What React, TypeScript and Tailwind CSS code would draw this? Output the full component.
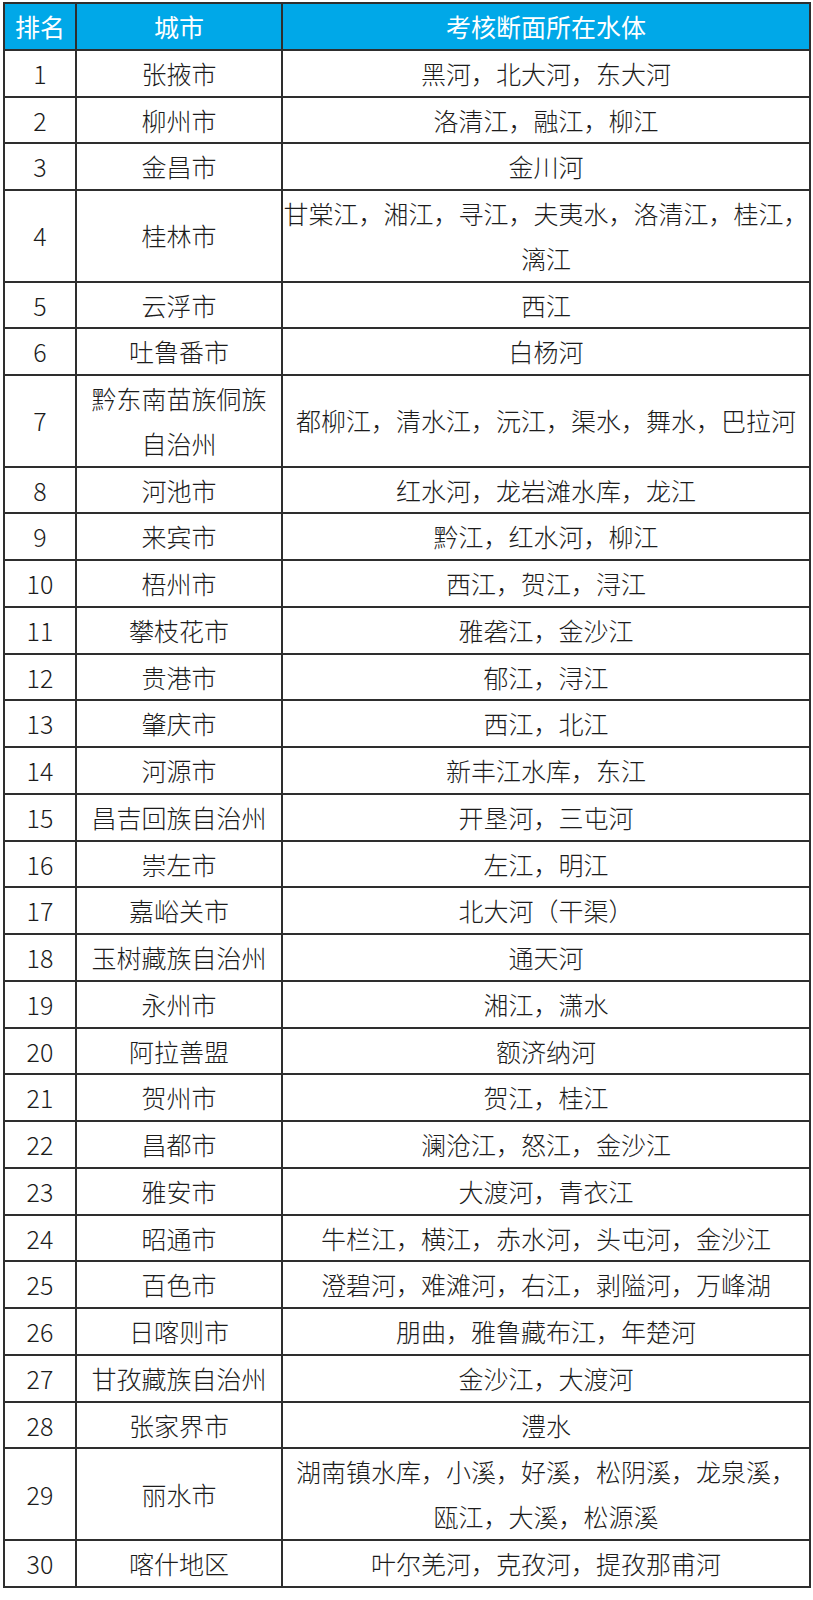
import React from 'react';

type Row = { rank: number; city: string[]; water: string[] };

const ROWS: Row[] = [
  { rank: 1, city: ['张掖市'], water: ['黑河，北大河，东大河'] },
  { rank: 2, city: ['柳州市'], water: ['洛清江，融江，柳江'] },
  { rank: 3, city: ['金昌市'], water: ['金川河'] },
  { rank: 4, city: ['桂林市'], water: ['甘棠江，湘江，寻江，夫夷水，洛清江，桂江，', '漓江'] },
  { rank: 5, city: ['云浮市'], water: ['西江'] },
  { rank: 6, city: ['吐鲁番市'], water: ['白杨河'] },
  { rank: 7, city: ['黔东南苗族侗族', '自治州'], water: ['都柳江，清水江，沅江，渠水，舞水，巴拉河'] },
  { rank: 8, city: ['河池市'], water: ['红水河，龙岩滩水库，龙江'] },
  { rank: 9, city: ['来宾市'], water: ['黔江，红水河，柳江'] },
  { rank: 10, city: ['梧州市'], water: ['西江，贺江，浔江'] },
  { rank: 11, city: ['攀枝花市'], water: ['雅砻江，金沙江'] },
  { rank: 12, city: ['贵港市'], water: ['郁江，浔江'] },
  { rank: 13, city: ['肇庆市'], water: ['西江，北江'] },
  { rank: 14, city: ['河源市'], water: ['新丰江水库，东江'] },
  { rank: 15, city: ['昌吉回族自治州'], water: ['开垦河，三屯河'] },
  { rank: 16, city: ['崇左市'], water: ['左江，明江'] },
  { rank: 17, city: ['嘉峪关市'], water: ['北大河（干渠）'] },
  { rank: 18, city: ['玉树藏族自治州'], water: ['通天河'] },
  { rank: 19, city: ['永州市'], water: ['湘江，潇水'] },
  { rank: 20, city: ['阿拉善盟'], water: ['额济纳河'] },
  { rank: 21, city: ['贺州市'], water: ['贺江，桂江'] },
  { rank: 22, city: ['昌都市'], water: ['澜沧江，怒江，金沙江'] },
  { rank: 23, city: ['雅安市'], water: ['大渡河，青衣江'] },
  { rank: 24, city: ['昭通市'], water: ['牛栏江，横江，赤水河，头屯河，金沙江'] },
  { rank: 25, city: ['百色市'], water: ['澄碧河，难滩河，右江，剥隘河，万峰湖'] },
  { rank: 26, city: ['日喀则市'], water: ['朋曲，雅鲁藏布江，年楚河'] },
  { rank: 27, city: ['甘孜藏族自治州'], water: ['金沙江，大渡河'] },
  { rank: 28, city: ['张家界市'], water: ['澧水'] },
  { rank: 29, city: ['丽水市'], water: ['湖南镇水库，小溪，好溪，松阴溪，龙泉溪，', '瓯江，大溪，松源溪'] },
  { rank: 30, city: ['喀什地区'], water: ['叶尔羌河，克孜河，提孜那甫河'] },
];

function Lines({ lines }: { lines: string[] }) {
  return (
    <>
      {lines.map((l, i) => (
        <div key={i} className="whitespace-nowrap">
          {l}
        </div>
      ))}
    </>
  );
}

export default function App() {
  return (
    <div className="bg-white min-h-[1600px] pt-[2px] pl-[3px]">
      <div
        className="grid grid-cols-[70px_204px_526px] gap-[2px] bg-[#2e2e2e] p-[2px] w-[808px] text-[25px] leading-[44.75px] text-[#1c1c1c] font-light"
        style={{ fontFamily: '"Noto Sans CJK SC", "Noto Sans", sans-serif' }}
      >
        <div className="bg-[#00a8e8] text-white font-normal flex items-center justify-center">排名</div>
        <div className="bg-[#00a8e8] text-white font-normal flex items-center justify-center">城市</div>
        <div className="bg-[#00a8e8] text-white font-normal flex items-center justify-center">考核断面所在水体</div>
        {ROWS.map((r) => (
          <React.Fragment key={r.rank}>
            <div className="bg-white flex items-center justify-center">{r.rank}</div>
            <div className="bg-white flex flex-col items-center justify-center">
              <Lines lines={r.city} />
            </div>
            <div className="bg-white flex flex-col items-center justify-center">
              <Lines lines={r.water} />
            </div>
          </React.Fragment>
        ))}
      </div>
    </div>
  );
}
